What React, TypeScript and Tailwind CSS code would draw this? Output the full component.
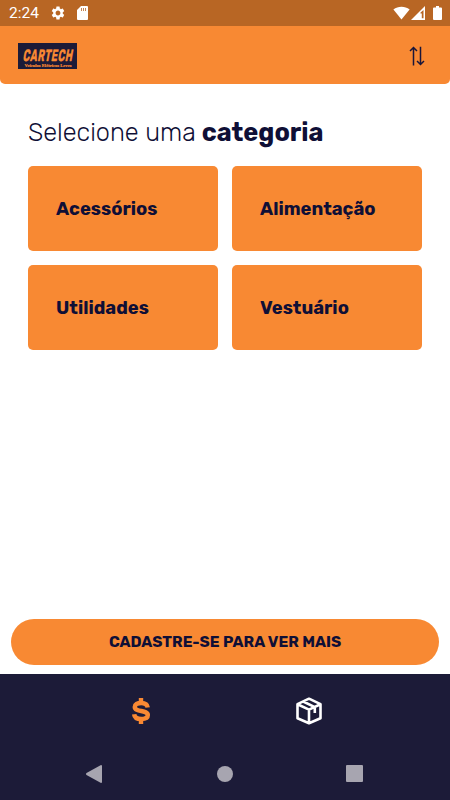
import { MdSettings } from 'react-icons/md';

const categories = ['Acessórios', 'Alimentação', 'Utilidades', 'Vestuário'];

const StatusBar = () => (
    <div className="flex h-[26px] items-center bg-[#b86624] text-white">
        <span className="ml-[9px] w-[41px] pt-[2px] font-['Roboto'] text-[15.5px] leading-none">2:24</span>
        <MdSettings className="h-4 w-4" />
        <svg className="ml-[11px] h-[14px] w-[11px]" viewBox="0 0 11 14">
            <path fill="currentColor" d="M4 0h6a1 1 0 0 1 1 1v12a1 1 0 0 1-1 1H1a1 1 0 0 1-1-1V4z" />
            <path stroke="#b86624" strokeWidth="0.8" d="M4.5 2v3M6.5 2v3M8.5 2v3" />
        </svg>
        <svg className="ml-auto h-[14px] w-[17px]" viewBox="0 0 17 14">
            <path fill="currentColor" d="M8.5 13.6.4 3.4C5-.3 12-.3 16.6 3.4z" />
        </svg>
        <svg className="ml-[1px] h-[14px] w-[14px]" viewBox="0 0 14 14">
            <path fill="currentColor" d="M14 0v14H0z" />
            <path fill="#b86624" d="M9.5 6.5 12.5 4v8.2h-1.7V7.5H9.5z" />
        </svg>
        <svg className="ml-2 mr-[8px] h-[14px] w-[9px]" viewBox="0 0 9 14">
            <path fill="currentColor" d="M3 0h3v1.4h2a1 1 0 0 1 1 1V13a1 1 0 0 1-1 1H1a1 1 0 0 1-1-1V2.4a1 1 0 0 1 1-1h2z" />
        </svg>
    </div>
);

const Logo = () => (
    <svg className="h-[26px] w-[59px] overflow-visible" viewBox="0 0 59 26">
        <rect width="59" height="26" fill="#1c1b38" />
        <text
            transform="translate(4.5 17.7) skewX(-10)"
            fontFamily="Rubik, sans-serif"
            fontWeight="700"
            fontSize="16.5"
            letterSpacing="0.8"
            textLength="50"
            lengthAdjust="spacingAndGlyphs"
            fill="#f98933"
            stroke="#f98933"
            strokeWidth="0.3"
        >
            CARTECH
        </text>
        <text
            x="6.5"
            y="23.8"
            fontFamily="Liberation Serif, serif"
            fontWeight="700"
            fontSize="4.6"
            textLength="47"
            lengthAdjust="spacingAndGlyphs"
            fill="#f98933"
            stroke="#f98933"
            strokeWidth="0.2"
        >
            Veículos Elétricos Leves
        </text>
    </svg>
);

const Header = () => (
    <header className="flex h-[58px] items-center justify-between rounded-b-[5px] bg-[#f88933] pl-[18px] pr-[25px] pt-[2px]">
        <Logo />
        <svg className="h-5 w-4" viewBox="0 0 16 20" fill="none" stroke="#19163a" strokeWidth="1.5">
            <path d="M4.5 19.5V1.500M1 5l3.500-3.500L8 5M11.500.8v17.700M8 15l3.500 3.500L15 15" />
        </svg>
    </header>
);

const BottomBar = () => (
    <footer className="h-[126px] bg-[#1c1b38]">
        <nav className="flex h-[74px] items-center justify-around px-[57px]">
            <svg className="h-7 w-7" viewBox="0 0 28 28" fill="none" stroke="#f98933">
                <path strokeWidth="4.4" d="M14 1v4.5M14 22.5V27" />
                <path strokeWidth="4.5" d="M20.7 10.5C20.4 7.5 18 5.9 14.2 5.9c-3.800 0-6.400 1.500-6.400 4 0 5.500 13 2.700 13 8.200 0 2.600-2.700 4-6.600 4-4 0-6.700-1.500-7-4.800" />
            </svg>
            <svg className="h-7 w-7" viewBox="0 0 28 28" fill="none" stroke="#fff" strokeWidth="2.6" strokeLinejoin="round">
                <path d="M14 1.700 25.500 7.200v14L14 26.200 2.500 21.200v-14zM2.500 7.200 14 12.600l11.500-5.400M14 12.600v13.600M8.200 4.500l11.600 5.600V16" />
            </svg>
        </nav>
        <div className="flex h-[52px] items-center justify-between pl-[86px] pr-[87px] pb-px">
            <svg className="h-[18px] w-[17px]" viewBox="0 0 17 18" fill="#a7a5b0">
                <path d="M15 0q1 0 1 1v16q0 1-1 1L.5 10Q-.5 9 .5 8z" />
            </svg>
            <div className="h-4 w-4 rounded-full bg-[#a7a5b0]" />
            <div className="h-[17px] w-[17px] rounded-[1px] bg-[#a7a5b0]" />
        </div>
    </footer>
);

const App = () => {
    return (
        <div className="flex h-screen flex-col bg-white font-['Rubik','Inter',sans-serif] text-[#0f0f36]">
            <StatusBar />
            <Header />

            <main className="flex-1 px-7 pt-[33px]">
                <h1 className="flex h-8 items-center whitespace-nowrap text-[25.3px] font-light">
                    <span>Selecione uma</span>
                    <strong className="ml-1.5 font-bold">categoria</strong>
                </h1>
                <div className="mt-[16.5px] grid grid-cols-2 gap-x-[14px] gap-y-[14.5px]">
                    {categories.map((category) => (
                        <button
                            key={category}
                            className="flex h-[85px] items-center rounded-[5px] bg-[#f88933] pl-7 pt-[3px] text-[18.4px] font-bold"
                        >
                            {category}
                        </button>
                    ))}
                </div>
            </main>

            <div className="px-[11px] pb-[9px]">
                <button className="h-[46px] w-full rounded-full bg-[#f88933] pt-[2px] text-[15.4px] font-bold">
                    CADASTRE-SE PARA VER MAIS
                </button>
            </div>
            <BottomBar />
        </div>
    );
};

export default App;
